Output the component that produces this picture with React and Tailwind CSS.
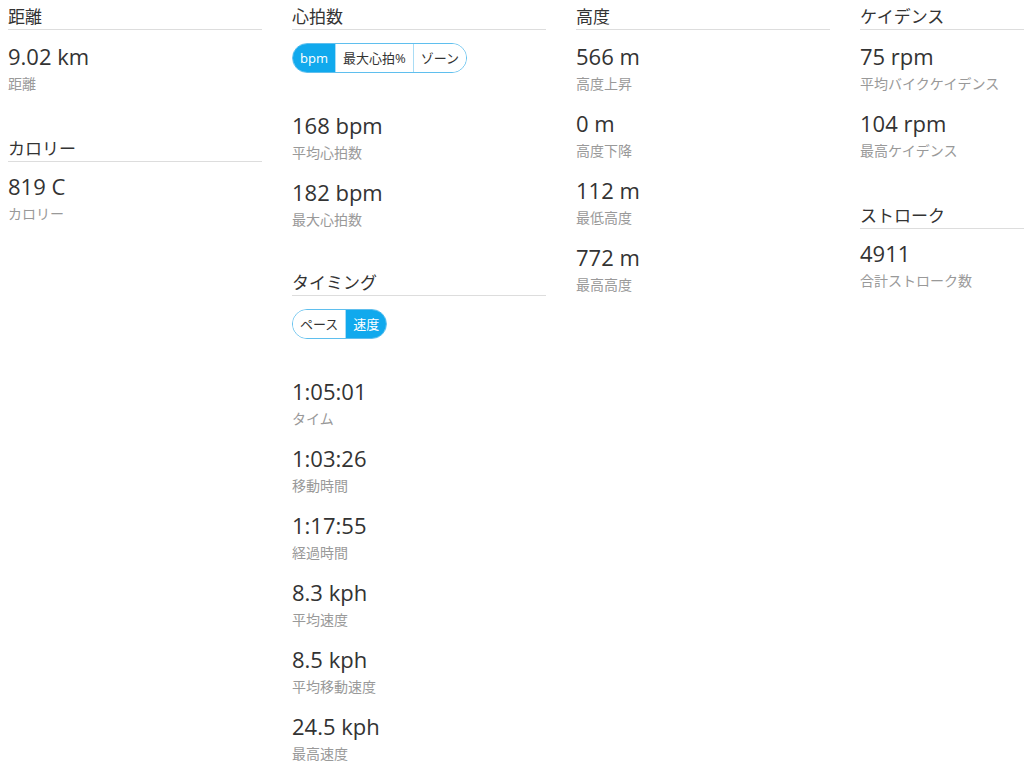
import React from "react";

const FONT = { fontFamily: '"Open Sans", "Noto Sans CJK JP", sans-serif' };

function Heading({ children }) {
  return (
    <div className="text-[17px] leading-[22px] pb-[1px] border-b border-[#dddddd] text-[#333333]">
      {children}
    </div>
  );
}

function Stat({ value, label }) {
  return (
    <div className="flex flex-col mb-[13px]">
      <div className="text-[22px] leading-[32px] h-[32px] text-[#333333] whitespace-nowrap">{value}</div>
      <div className="mt-[2px] text-[14px] leading-[20px] text-[#999999] whitespace-nowrap">{label}</div>
    </div>
  );
}

function Stats({ items, tight }) {
  return (
    <div className={"flex flex-col " + (tight ? "mt-[8px]" : "mt-[10px]")}>
      {items.map(([v, l]) => (
        <Stat key={l} value={v} label={l} />
      ))}
    </div>
  );
}

function Toggle({ options, active }) {
  return (
    <div className="mt-[13px] mb-[26px] flex">
      <div className="flex h-[30px] rounded-full border border-[#5fbfee] overflow-hidden">
        {options.map((o, i) => (
          <div
            key={o}
            className={
              "flex items-center px-[7px] text-[13px] leading-[18px] whitespace-nowrap " +
              (i > 0 ? "border-l border-[#a9dcf5] " : "") +
              (i === active ? "bg-[#11a9ed] text-white" : "bg-white text-[#333333]")
            }
          >
            {o}
          </div>
        ))}
      </div>
    </div>
  );
}

function Section({ children, gap }) {
  const cls = gap === 0 ? "" : gap === 29 ? "mt-[29px]" : "mt-[31px]";
  return <div className={"flex flex-col " + cls}>{children}</div>;
}

export default function App() {
  return (
    <div className="w-full h-[773px] overflow-hidden bg-white" style={FONT}>
      <div className="flex items-start gap-[30px] pl-[8px] pt-[6px] w-[1114px]">
        <div className="w-[254px] shrink-0 flex flex-col">
          <Section gap={0}>
            <Heading>距離</Heading>
            <Stats items={[["9.02 km", "距離"]]} />
          </Section>
          <Section>
            <Heading>カロリー</Heading>
            <Stats tight items={[["819 C", "カロリー"]]} />
          </Section>
        </div>

        <div className="w-[254px] shrink-0 flex flex-col">
          <Section gap={0}>
            <Heading>心拍数</Heading>
            <Toggle options={["bpm", "最大心拍%", "ゾーン"]} active={0} />
            <Stats
              items={[
                ["168 bpm", "平均心拍数"],
                ["182 bpm", "最大心拍数"],
              ]}
            />
          </Section>
          <Section gap={29}>
            <Heading>タイミング</Heading>
            <Toggle options={["ペース", "速度"]} active={1} />
            <Stats
              items={[
                ["1:05:01", "タイム"],
                ["1:03:26", "移動時間"],
                ["1:17:55", "経過時間"],
                ["8.3 kph", "平均速度"],
                ["8.5 kph", "平均移動速度"],
                ["24.5 kph", "最高速度"],
              ]}
            />
          </Section>
        </div>

        <div className="w-[254px] shrink-0 flex flex-col">
          <Section gap={0}>
            <Heading>高度</Heading>
            <Stats
              items={[
                ["566 m", "高度上昇"],
                ["0 m", "高度下降"],
                ["112 m", "最低高度"],
                ["772 m", "最高高度"],
              ]}
            />
          </Section>
        </div>

        <div className="w-[254px] shrink-0 flex flex-col">
          <Section gap={0}>
            <Heading>ケイデンス</Heading>
            <Stats
              items={[
                ["75 rpm", "平均バイクケイデンス"],
                ["104 rpm", "最高ケイデンス"],
              ]}
            />
          </Section>
          <Section>
            <Heading>ストローク</Heading>
            <Stats tight items={[["4911", "合計ストローク数"]]} />
          </Section>
        </div>
      </div>
    </div>
  );
}
